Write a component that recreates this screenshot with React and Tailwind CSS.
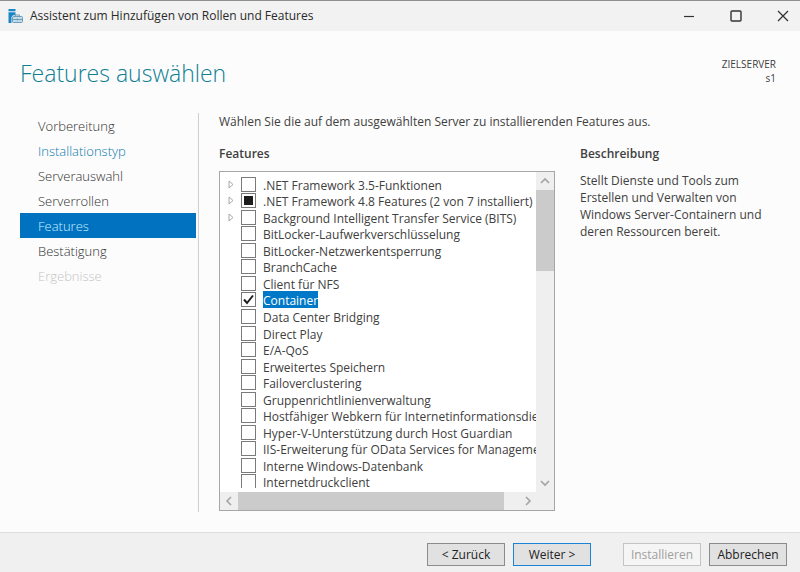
import clsx from 'clsx';

const steps = [
    { label: 'Vorbereitung' },
    { label: 'Installationstyp', visited: true },
    { label: 'Serverauswahl' },
    { label: 'Serverrollen' },
    { label: 'Features', current: true },
    { label: 'Bestätigung' },
    { label: 'Ergebnisse', disabled: true },
];

const features = [
    { name: '.NET Framework 3.5-Funktionen', expandable: true },
    { name: '.NET Framework 4.8 Features (2 von 7 installiert)', expandable: true, partial: true },
    { name: 'Background Intelligent Transfer Service (BITS)', expandable: true },
    { name: 'BitLocker-Laufwerkverschlüsselung' },
    { name: 'BitLocker-Netzwerkentsperrung' },
    { name: 'BranchCache' },
    { name: 'Client für NFS' },
    { name: 'Container', checked: true, selected: true },
    { name: 'Data Center Bridging' },
    { name: 'Direct Play' },
    { name: 'E/A-QoS' },
    { name: 'Erweitertes Speichern' },
    { name: 'Failoverclustering' },
    { name: 'Gruppenrichtlinienverwaltung' },
    { name: 'Hostfähiger Webkern für Internetinformationsdienste' },
    { name: 'Hyper-V-Unterstützung durch Host Guardian' },
    { name: 'IIS-Erweiterung für OData Services for Management' },
    { name: 'Interne Windows-Datenbank' },
    { name: 'Internetdruckclient' },
];

const Chevron = ({ d }) => (
    <svg width="10" height="10" viewBox="0 0 10 10" fill="none" stroke="#a3a3a3" strokeWidth="1.6">
        <path d={d} />
    </svg>
);

const TitleBar = () => (
    <header className="flex h-[31px] items-center border-t border-[#8f8f8f] bg-[#f2f2f2] pr-[11px] pl-2">
        {/* Server tower with toolbox */}
        <svg width="16" height="16" viewBox="0 0 16 16">
            <path d="M0.500 1h7v2.300h-7zM0.500 4.300h7v3H5L3.500 9v6h-3z" fill="#1b86c6" />
            <path d="M7.500 8.500V7h4v1.500" fill="none" stroke="#6f9cb8" />
            <rect x="4.500" y="8.500" width="10" height="6" rx="1" fill="#c3dbe9" stroke="#6f9cb8" />
            <path d="M5 11.500h9M9.500 10.500v2" stroke="#6f9cb8" />
        </svg>
        <h1 className="ml-1.5 flex-1 text-[12px] text-[#2a2a2a]">Assistent zum Hinzufügen von Rollen und Features</h1>
        <div className="flex gap-[35px]">
            <button type="button" aria-label="Minimieren">
                <svg width="12" height="12" viewBox="0 0 12 12" stroke="#333" strokeWidth="1.2"><path d="M1 6.500h10" /></svg>
            </button>
            <button type="button" aria-label="Maximieren">
                <svg width="12" height="12" viewBox="0 0 12 12" fill="none" stroke="#333" strokeWidth="1.4"><rect x="1" y="1" width="10" height="10" rx="1" /></svg>
            </button>
            <button type="button" aria-label="Schließen">
                <svg width="12" height="12" viewBox="0 0 12 12" stroke="#333" strokeWidth="1.3"><path d="M1 1l10 10M11 1L1 11" /></svg>
            </button>
        </div>
    </header>
);

const Steps = () => (
    <nav className="w-[179px] shrink-0 border-r border-[#cfcfcf] pr-0.5">
        <ul>
            {steps.map((step) => (
                <li key={step.label}>
                    <a
                        href="#"
                        className={clsx(
                            'flex h-[25px] items-center pt-0.5 pl-[18px] text-[13px] font-light',
                            step.current && 'bg-[#0072bf] text-[#c8f0ff]',
                            step.visited && 'text-[#0a78ac]',
                            step.disabled && 'text-[#c4c4c4]',
                            !step.current && !step.visited && !step.disabled && 'text-[#303030]'
                        )}
                    >
                        {step.label}
                    </a>
                </li>
            ))}
        </ul>
    </nav>
);

const Feature = ({ feature }) => (
    <li className="flex min-h-0 items-center">
        <span className="flex w-[13px] shrink-0">
            {feature.expandable && (
                <svg width="6" height="9" viewBox="0 0 6 9" fill="none" stroke="#a8a8a8"><path d="M1 1l4 3.500L1 8z" /></svg>
            )}
        </span>
        <label className="flex items-center">
            <span className="grid shrink-0 place-items-center">
                <input
                    type="checkbox"
                    defaultChecked={feature.checked}
                    className="col-start-1 row-start-1 size-[15px] appearance-none border border-[#7a7a7a] bg-white"
                />
                {feature.partial && <span className="col-start-1 row-start-1 size-[9px] bg-[#1e1e1e]" />}
                {feature.checked && (
                    <svg className="col-start-1 row-start-1" width="11" height="11" viewBox="0 0 11 11" fill="none" stroke="#1e1e1e" strokeWidth="2">
                        <path d="M1 5.500l3 3.500L10 1.500" />
                    </svg>
                )}
            </span>
            <span className={clsx('ml-[7px] pt-0.5 leading-[15px] whitespace-nowrap', feature.selected && 'bg-[#0078c8] text-white')}>
                {feature.name}
            </span>
        </label>
    </li>
);

const FeatureList = () => (
    <div className="mt-[9px] grid h-[340px] grid-cols-[minmax(0,1fr)_18px] grid-rows-[minmax(0,1fr)_18px] border border-[#a6a6a6] bg-white">
        <div className="mb-1 overflow-hidden pt-1 pl-2">
            <ul className="grid h-[314px] auto-rows-fr text-[12px] text-[#404040]">
                {features.map((feature) => (
                    <Feature key={feature.name} feature={feature} />
                ))}
            </ul>
        </div>
        <div className="flex flex-col items-center bg-[#efefef]">
            <span className="flex h-[18px] items-center"><Chevron d="M1 7l4-4 4 4" /></span>
            <span className="h-[81px] w-full bg-[#cbcbcb]" />
            <span className="mt-auto flex h-[18px] items-center"><Chevron d="M1 3l4 4 4-4" /></span>
        </div>
        <div className="col-span-2 flex items-center bg-[#efefef]">
            <span className="flex w-[18px] justify-center"><Chevron d="M7 1L3 5l4 4" /></span>
            <span className="mr-[18px] h-full flex-1 bg-[#cbcbcb]" />
            <span className="mr-5 flex w-3 justify-center"><Chevron d="M3 1l4 4-4 4" /></span>
        </div>
    </div>
);

const WizardButton = ({ children, className, ...props }) => (
    <button type="button" className={clsx('h-[23px] w-[78px] border text-[12px]', className)} {...props}>
        {children}
    </button>
);

const App = () => (
    <div className="flex min-h-screen flex-col bg-[#fcfcfc] font-['Open_Sans','Noto_Sans',sans-serif] text-[#404040]">
        <TitleBar />
        <div className="flex items-start justify-between pt-6 pr-6 pl-5">
            <h2 className="text-[23px] leading-9 font-light text-[#0f7f94]">Features auswählen</h2>
            <p className="pt-0.5 text-right text-[10px] leading-[14px]">
                ZIELSERVER
                <br />
                s1
            </p>
        </div>
        <main className="flex flex-1 pt-[22px] pb-5 pl-5">
            <Steps />
            <div className="min-w-0 flex-1 px-5 pt-px">
                <p className="text-[12px] leading-4">Wählen Sie die auf dem ausgewählten Server zu installierenden Features aus.</p>
                <div className="mt-4 flex gap-[25px]">
                    <section className="min-w-0 flex-1">
                        <h3 className="text-[12px] leading-4 font-semibold">Features</h3>
                        <FeatureList />
                    </section>
                    <section className="w-[200px] shrink-0">
                        <h3 className="text-[12px] leading-4 font-semibold">Beschreibung</h3>
                        <p className="mt-2.5 text-[12px] leading-[17px]">
                            Stellt Dienste und Tools zum Erstellen und Verwalten von Windows Server-Containern und deren Ressourcen bereit.
                        </p>
                    </section>
                </div>
            </div>
        </main>
        <footer className="flex h-10 items-center justify-end border-t border-[#dedede] bg-[#f0f0f0] pt-1 pr-[13px]">
            <WizardButton className="border-[#8c8c8c] bg-[#e1e1e1] text-[#222]">&lt; Zurück</WizardButton>
            <WizardButton className="ml-2 border-[#1883d7] bg-[#e1e1e1] text-[#222]">Weiter &gt;</WizardButton>
            <WizardButton disabled className="ml-8 border-[#c4c4c4] bg-[#f5f5f5] text-[#a0a0a0]">Installieren</WizardButton>
            <WizardButton className="ml-2 border-[#8c8c8c] bg-[#e1e1e1] text-[#222]">Abbrechen</WizardButton>
        </footer>
    </div>
);

export default App;
